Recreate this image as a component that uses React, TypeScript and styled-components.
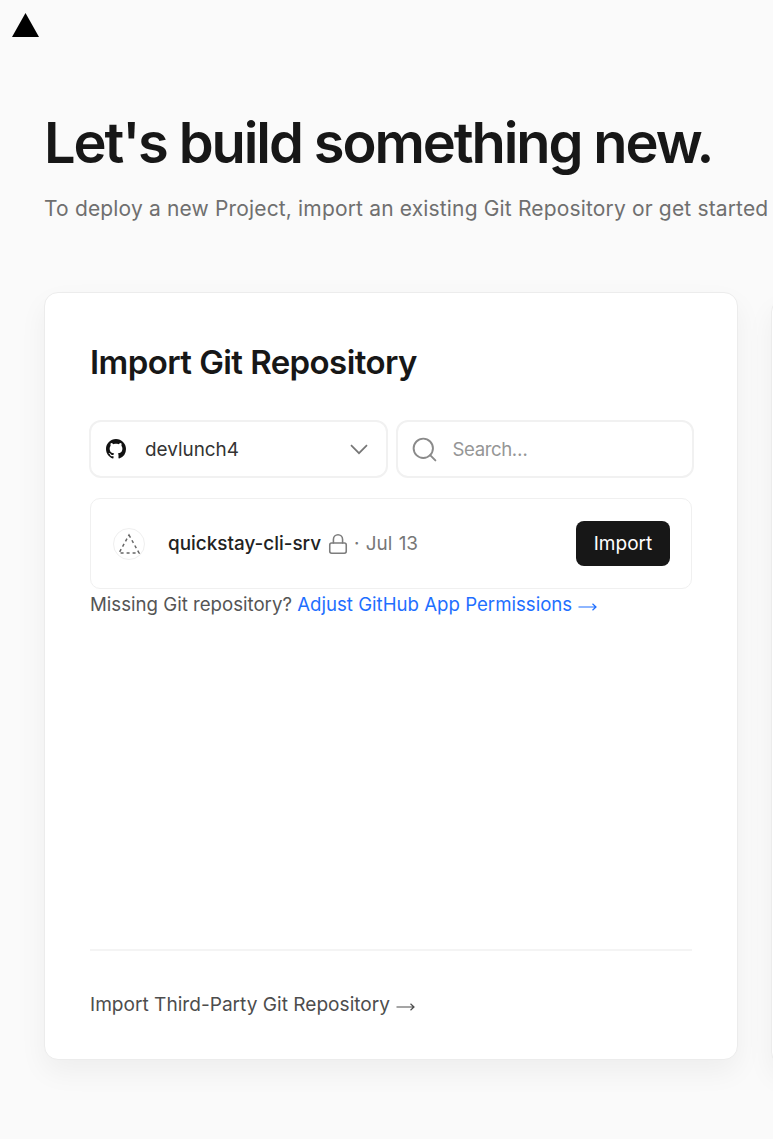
import { createGlobalStyle, styled } from 'styled-components'
import { Search, Lock } from 'lucide-react'

const GlobalStyle = createGlobalStyle`
  html, body {
    margin: 0;
    padding: 0;
    background: #fafafa;
    font-family: Inter, "Liberation Sans", sans-serif;
    color: #171717;
  }
`

const LogoMark = () => (
  <svg width="27" height="24" viewBox="0 0 27 24" aria-hidden="true">
    <path d="M13.5 0 L27 24 H0 Z" fill="#000" />
  </svg>
)

const GithubMark = () => (
  <svg width="20" height="20" viewBox="0 0 16 16" aria-hidden="true">
    <path
      fill="#111"
      d="M8 0C3.58 0 0 3.58 0 8c0 3.54 2.29 6.53 5.47 7.59.4.07.55-.17.55-.38 0-.19-.01-.82-.01-1.49-2.01.37-2.53-.49-2.69-.94-.09-.23-.48-.94-.82-1.13-.28-.15-.68-.52-.01-.53.63-.01 1.08.58 1.23.82.72 1.21 1.87.87 2.33.66.07-.52.28-.87.51-1.07-1.78-.2-3.64-.89-3.64-3.95 0-.87.31-1.59.82-2.15-.08-.2-.36-1.02.08-2.12 0 0 .67-.21 2.2.82.64-.18 1.32-.27 2-.27s1.36.09 2 .27c1.53-1.04 2.2-.82 2.2-.82.44 1.1.16 1.92.08 2.12.51.56.82 1.27.82 2.15 0 3.07-1.87 3.75-3.65 3.95.29.25.54.73.54 1.48 0 1.07-.01 1.93-.01 2.2 0 .21.15.46.55.38A8.01 8.01 0 0 0 16 8c0-4.42-3.58-8-8-8z"
    />
  </svg>
)

const RepoGlyph = () => (
  <svg width="24" height="22" viewBox="0 0 24 22" aria-hidden="true">
    <path
      d="M12 2 L22 20 H2 Z"
      fill="none"
      stroke="#666"
      strokeWidth="1.5"
      strokeDasharray="3 3"
    />
  </svg>
)

const Caret = () => (
  <svg width="18" height="11" viewBox="0 0 18 11" aria-hidden="true">
    <path d="M1 1.2 L9 9.2 L17 1.2" fill="none" stroke="#777" strokeWidth="1.7" />
  </svg>
)

const Arrow = () => (
  <ArrowSvg width="19" height="10" viewBox="0 0 19 10" aria-hidden="true">
    <path d="M0.5 5 H18 M14.5 1.8 L18 5 L14.5 8.2" fill="none" stroke="currentColor" strokeWidth="1.2" />
  </ArrowSvg>
)

export default function App() {
  return (
    <>
      <GlobalStyle />
      <Page>
        <TopBar>
          <LogoMark />
        </TopBar>
        <Hero>
          <Title>Let's build something new.</Title>
          <Subtitle>To deploy a new Project, import an existing Git Repository or get started</Subtitle>
        </Hero>
        <Columns>
          <Card>
            <CardTitle>Import Git Repository</CardTitle>
            <Controls>
              <AccountSelect>
                <GithubMark />
                <AccountName>devlunch4</AccountName>
                <Caret />
              </AccountSelect>
              <SearchBox>
                <Search size={29} color="#8a8a8a" strokeWidth={1.6} />
                <SearchInput placeholder="Search…" />
              </SearchBox>
            </Controls>
            <RepoRow>
              <RepoAvatar>
                <RepoGlyph />
              </RepoAvatar>
              <RepoName>quickstay-cli-srv</RepoName>
              <Lock size={22} color="#7d7d7d" strokeWidth={1.7} />
              <RepoDate>· Jul 13</RepoDate>
              <ImportButton>Import</ImportButton>
            </RepoRow>
            <MissingLine>
              Missing Git repository? <BlueLink>Adjust GitHub App Permissions <Arrow /></BlueLink>
            </MissingLine>
            <CardFooter>
              <FooterLink>Import Third-Party Git Repository <Arrow /></FooterLink>
            </CardFooter>
          </Card>
          <NextCard />
        </Columns>
      </Page>
    </>
  )
}

const Page = styled.div`
  width: 773px;
  height: 1139px;
  overflow: hidden;
  background: #fafafa;
`

const TopBar = styled.header`
  display: flex;
  padding: 13px 0 0 12px;
  height: 24px;
`

const Hero = styled.div`
  padding: 73px 0 0 44px;
`

const Title = styled.h1`
  margin: 0;
  font-size: 56px;
  line-height: 66px;
  font-weight: 600;
  letter-spacing: -2.1px;
  white-space: nowrap;
  color: #171717;
`

const Subtitle = styled.p`
  margin: 18px 0 0;
  font-size: 21px;
  line-height: 30px;
  letter-spacing: 0.16px;
  color: #6f6f6f;
  white-space: nowrap;
`

const Columns = styled.div`
  display: flex;
  gap: 33px;
  margin: 68px 0 0 44px;
`

const Card = styled.section`
  flex: none;
  display: flex;
  flex-direction: column;
  box-sizing: border-box;
  width: 694px;
  height: 768px;
  padding: 48px 45px 0;
  background: #fff;
  border: 1px solid #ececec;
  border-radius: 14px;
  box-shadow: 0 12px 28px rgba(0, 0, 0, 0.05);
`

const NextCard = styled(Card)`
  margin-top: 6px;
`

const CardTitle = styled.h2`
  margin: 0;
  font-size: 33px;
  line-height: 42px;
  font-weight: 600;
  letter-spacing: -0.58px;
  color: #171717;
`

const Controls = styled.div`
  display: grid;
  grid-template-columns: 1fr 1fr;
  gap: 8px;
  margin: 37px -2px 0 -1px;
`

const fieldBox = `
  min-width: 0;
  display: flex;
  align-items: center;
  box-sizing: border-box;
  height: 58px;
  background: #fff;
  border: 2px solid #f1f1f1;
  border-radius: 12px;
`

const AccountSelect = styled.div`
  ${fieldBox}
  padding: 0 18px 0 15px;
`

const AccountName = styled.span`
  flex: 1;
  margin-left: 19px;
  font-size: 18.9px;
  color: #333;
`

const SearchBox = styled.label`
  ${fieldBox}
  padding: 0 12px;
`

const SearchInput = styled.input`
  flex: 1;
  min-width: 0;
  margin-left: 14px;
  border: 0;
  outline: 0;
  padding: 0;
  background: transparent;
  font-family: inherit;
  font-size: 18.6px;
  letter-spacing: -0.4px;
  &::placeholder {
    color: #969696;
    opacity: 1;
  }
`

const RepoRow = styled.div`
  display: flex;
  align-items: center;
  gap: 4px;
  box-sizing: border-box;
  height: 91px;
  margin: 20px 0 0;
  padding: 0 21px 0 22px;
  border: 1px solid #f0f0f0;
  border-radius: 10px;
`

const RepoAvatar = styled.div`
  display: flex;
  align-items: center;
  justify-content: center;
  box-sizing: border-box;
  width: 32px;
  height: 32px;
  margin-right: 19px;
  border: 1px solid #efefef;
  border-radius: 50%;
`

const RepoName = styled.span`
  margin-right: 2px;
  font-size: 18.9px;
  font-weight: 500;
  color: #222;
`

const RepoDate = styled.span`
  flex: 1;
  margin-left: 1px;
  font-size: 18.9px;
  word-spacing: 1px;
  color: #777;
`

const ImportButton = styled.button`
  height: 45px;
  width: 94px;
  padding: 0;
  border: 0;
  border-radius: 8px;
  background: #171717;
  color: #fff;
  font-family: inherit;
  font-size: 19px;
`

const MissingLine = styled.p`
  margin: 1px 0 0;
  font-size: 18.65px;
  line-height: 28px;
  color: #555;
`

const BlueLink = styled.a`
  color: #1f6fff;
`

const ArrowSvg = styled.svg`
  vertical-align: -1px;
  margin-left: 1px;
`

const CardFooter = styled.div`
  margin-top: auto;
  height: 110px;
  padding-top: 39px;
  box-sizing: border-box;
  border-top: 2px solid #f4f4f4;
`

const FooterLink = styled.a`
  font-size: 19.1px;
  line-height: 28px;
  color: #4d4d4d;
`
